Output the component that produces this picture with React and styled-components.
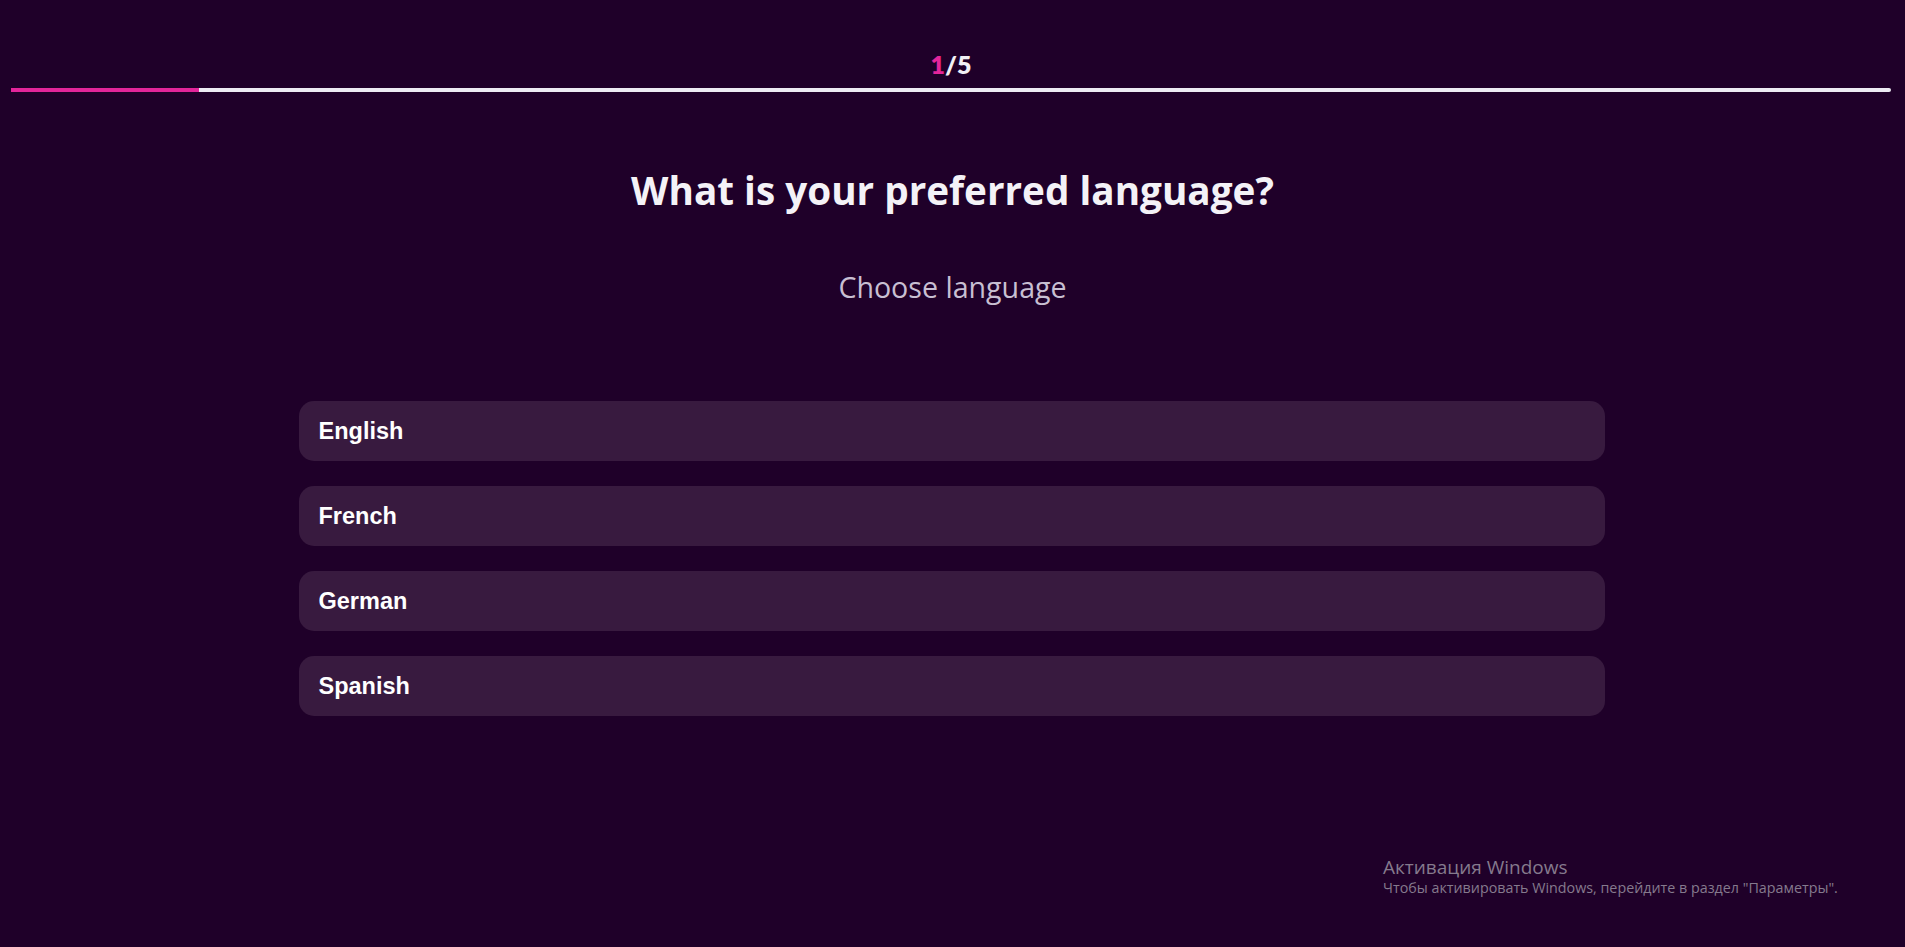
import { createGlobalStyle } from "styled-components";
import styled from "styled-components";

const GlobalStyle = createGlobalStyle`
  html, body {
    margin: 0;
    padding: 0;
    background-color: #1f0029;
  }
  body {
    font-family: "Open Sans", "Noto Sans", sans-serif;
  }
`;

const Page = styled.div`
  min-height: 947px;
  background-color: #1f0029;
  position: relative;
`;

const Header = styled.div`
  padding-top: 50px;
  display: flex;
  flex-direction: column;
  align-items: center;
`;

const Counter = styled.div`
  font-family: Lato, sans-serif;
  font-size: 25px;
  font-weight: 800;
  line-height: 28px;
  color: #f2f0f5;
  margin-right: 3px;
`;

const Current = styled.span`
  color: #e3259a;
`;

const Track = styled.div`
  margin: 10px 14px 0 11px;
  align-self: stretch;
  height: 4px;
  background-color: #ecebf3;
  border-radius: 0 2px 2px 0;
  overflow: hidden;
`;

const Fill = styled.div`
  height: 100%;
  background-color: #e3259a;
`;

const Content = styled.div`
  display: flex;
  flex-direction: column;
  align-items: center;
`;

const Title = styled.h1`
  margin: 74px 0 0;
  font-family: "Open Sans", sans-serif;
  font-size: 38.7px;
  font-weight: 700;
  line-height: 48px;
  color: #f4f2f7;
`;

const Subtitle = styled.p`
  margin: 55px 0 0;
  font-family: "Open Sans", sans-serif;
  font-size: 28.6px;
  font-weight: 400;
  line-height: 36px;
  color: #c8bfd2;
`;

const Options = styled.div`
  margin: 96px 2px 0 0;
  width: 1306px;
  display: flex;
  flex-direction: column;
  gap: 25px;
`;

const Option = styled.button`
  height: 60px;
  border: none;
  border-radius: 15px;
  background-color: #381a3f;
  padding: 0 20px;
  text-align: left;
  font-family: "Liberation Sans", Arial, sans-serif;
  font-size: 23.5px;
  font-weight: 700;
  color: #ffffff;
  cursor: pointer;
`;

const Watermark = styled.div`
  position: absolute;
  left: 1383px;
  top: 855px;
  font-family: "Open Sans", "Noto Sans", sans-serif;
  color: #857a8d;
`;

const WatermarkTitle = styled.div`
  font-size: 19px;
  line-height: 24px;
`;

const WatermarkText = styled.div`
  font-size: 14.3px;
  line-height: 18px;
`;

const languages = ["English", "French", "German", "Spanish"];

const App = () => {
  const step = 1;
  const total = 5;
  return (
    <Page>
      <GlobalStyle />
      <Header>
        <Counter>
          <Current>{step}</Current>/{total}
        </Counter>
        <Track>
          <Fill style={{ width: "10%" }} />
        </Track>
      </Header>
      <Content>
        <Title>What is your preferred language?</Title>
        <Subtitle>Choose language</Subtitle>
        <Options>
          {languages.map((lang) => (
            <Option key={lang}>{lang}</Option>
          ))}
        </Options>
      </Content>
      <Watermark>
        <WatermarkTitle>Активация Windows</WatermarkTitle>
        <WatermarkText>
          Чтобы активировать Windows, перейдите в раздел "Параметры".
        </WatermarkText>
      </Watermark>
    </Page>
  );
};

export default App;
